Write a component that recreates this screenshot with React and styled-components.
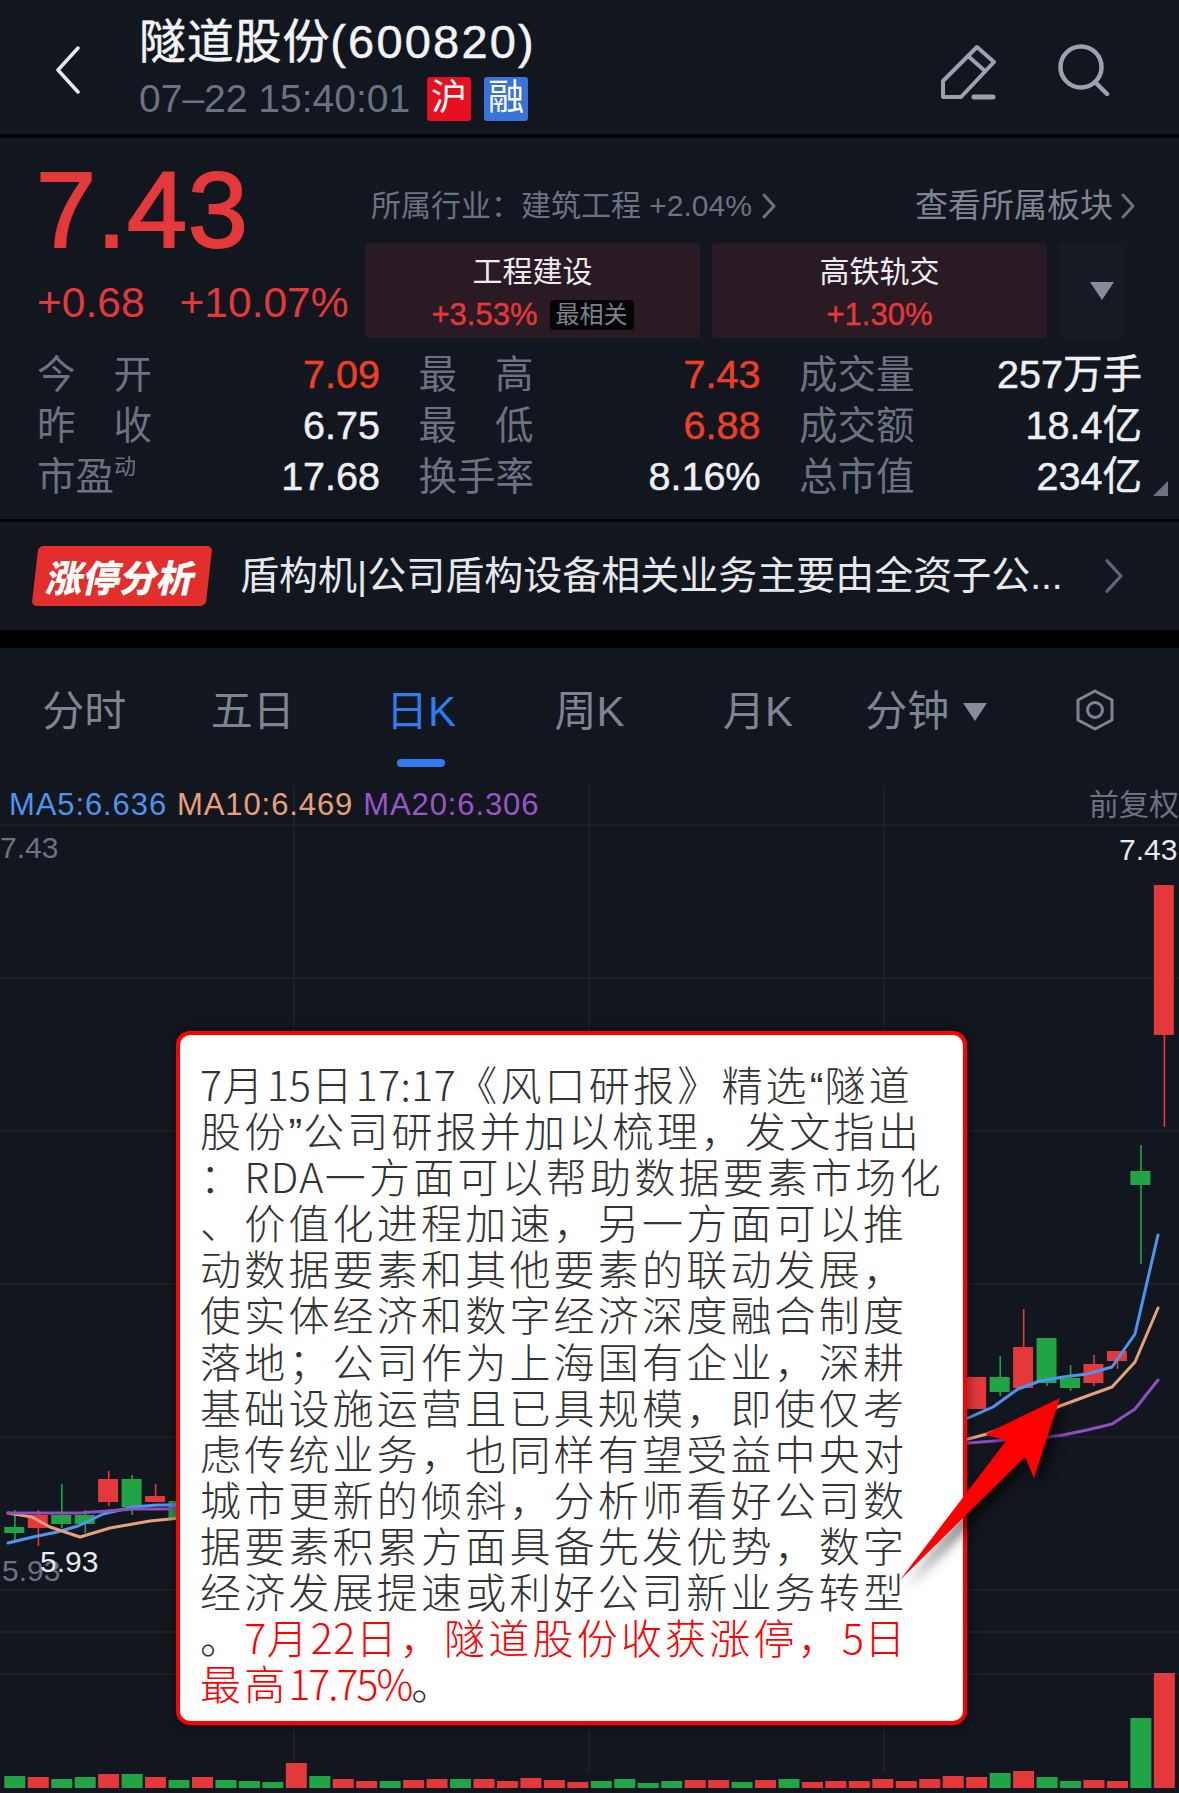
import React from 'react'
import styled, { createGlobalStyle } from 'styled-components'

const BG = '#12161e'
const RED = '#e5383a'
const ORANGE = '#ee3f26'
const GREEN = '#20a446'
const GREY = '#6b7280'
const LATIN = '"Liberation Sans", "Noto Sans CJK SC", sans-serif'

const GlobalStyle = createGlobalStyle`
	html, body {
		margin: 0;
		padding: 0;
		background: #000;
	}
	* {
		box-sizing: border-box;
	}
`

//data
const STATS = [
	{ label: '今开', wide: true, value: '7.09', color: ORANGE },
	{ label: '最高', wide: true, value: '7.43', color: ORANGE },
	{ label: '成交量', value: '257万手' },
	{ label: '昨收', wide: true, value: '6.75' },
	{ label: '最低', wide: true, value: '6.88', color: ORANGE },
	{ label: '成交额', value: '18.4亿' },
	{ label: '市盈', sup: '动', value: '17.68' },
	{ label: '换手率', value: '8.16%' },
	{ label: '总市值', value: '234亿' }
]

const TABS = ['分时', '五日', '日K', '周K', '月K']

// [index, isRed, bodyTop, bodyBottom, wickTop, wickBottom]
const CANDLES = [
	[0, false, 1527, 1533, 1510, 1540],
	[1, true, 1515, 1528, 1510, 1546],
	[2, false, 1515, 1524, 1484, 1528],
	[3, false, 1515, 1524, 1510, 1533],
	[4, true, 1479, 1502, 1471, 1506],
	[5, false, 1479, 1507, 1475, 1515],
	[6, true, 1496, 1502, 1484, 1502],
	[7, false, 1501, 1518, 1501, 1518],
	[41, true, 1377, 1409, 1377, 1409],
	[42, false, 1377, 1392, 1356, 1396],
	[43, true, 1347, 1388, 1309, 1388],
	[44, false, 1338, 1383, 1338, 1386],
	[45, false, 1378, 1388, 1365, 1391],
	[46, true, 1364, 1383, 1355, 1386],
	[47, true, 1351, 1361, 1351, 1369],
	[48, false, 1171, 1185, 1145, 1264],
	[49, true, 885, 1035, 885, 1127]
]

// [isRed, top]
const VOLUMES = [
	[0, 1776], [1, 1777], [0, 1779], [0, 1777], [1, 1774], [0, 1774], [1, 1777], [0, 1780], [1, 1777], [0, 1780],
	[0, 1781], [0, 1782], [1, 1763], [0, 1776], [1, 1779], [1, 1781], [0, 1781], [1, 1780], [1, 1779], [0, 1779],
	[1, 1779], [1, 1781], [1, 1778], [1, 1780], [1, 1782], [0, 1781], [0, 1779], [0, 1783], [0, 1781], [1, 1780],
	[1, 1780], [0, 1782], [1, 1780], [0, 1779], [1, 1782], [1, 1781], [1, 1781], [1, 1779], [1, 1781], [1, 1779],
	[1, 1776], [1, 1777], [0, 1773], [1, 1771], [0, 1777], [0, 1781], [1, 1780], [1, 1781], [0, 1718], [1, 1673]
]

const MA_LINES = [
	{ color: '#4f94ee', points: '8,1543 33,1537 57,1532 78,1526 103,1514 133,1507 157,1505 180,1505' },
	{ color: '#e8a07c', points: '8,1513 32,1517 50,1527 80,1537 110,1528 150,1521 180,1518' },
	{ color: '#8e4fc0', points: '8,1513 33,1513 80,1513 107,1511 133,1509 180,1509' },
	{ color: '#4f94ee', points: '960,1420 968,1418 993,1407 1018,1389 1040,1381 1063,1377 1087,1374 1112,1367 1135,1334 1158,1235' },
	{ color: '#e8a07c', points: '960,1441 968,1439 987,1434 1060,1406 1087,1396 1112,1387 1135,1362 1158,1308' },
	{ color: '#8e4fc0', points: '960,1444 968,1443 1007,1440 1047,1437 1063,1435 1087,1430 1112,1424 1135,1409 1158,1380' }
]

const barX = i => 4.3 + 23.46 * i

const Chevron = ({ width, height, color = '#6b7280', strokeWidth = 3 }) => (
	<svg width={width} height={height} viewBox="0 0 14 26">
		<path d="M2 2 L12 13 L2 24" fill="none" stroke={color} strokeWidth={strokeWidth} strokeLinecap="round" strokeLinejoin="round" />
	</svg>
)

const App = () => {
	return (
		<>
			<GlobalStyle />
			<Page>
				<Header>
					<BackIcon width="26" height="48" viewBox="0 0 26 48">
						<path d="M23 2 L3 24 L23 46" fill="none" stroke="#e6e8ec" strokeWidth="3.5" strokeLinecap="round" strokeLinejoin="round" />
					</BackIcon>
					<TitleBlock>
						<Title>
							隧道股份<TitleCode>(600820)</TitleCode>
						</Title>
						<SubTitle>
							<Clock>07–22 15:40:01</Clock>
							<Tag $bg="#e8101e">沪</Tag>
							<Tag $bg="#3a72d8">融</Tag>
						</SubTitle>
					</TitleBlock>
					<HeaderIcons>
						<svg width="56" height="56" viewBox="0 0 56 56">
							<g fill="none" stroke="#9ca1ae" strokeWidth="4" strokeLinejoin="round" strokeLinecap="round">
								<path d="M3 37 L37 3 L54 18 L21 53 L3 53 Z" />
								<path d="M28 12 L45 27" />
								<path d="M34 53 L53 53" strokeWidth="5" />
							</g>
						</svg>
						<svg width="52" height="52" viewBox="0 0 52 52">
							<g fill="none" stroke="#9ca1ae" strokeWidth="4.5" strokeLinecap="round">
								<circle cx="23" cy="23" r="20.5" />
								<path d="M37 38 L49 50" />
							</g>
						</svg>
					</HeaderIcons>
				</Header>

				<Quote>
					<QuoteTop>
						<PriceBlock>
							<Price>7.43</Price>
							<Change>
								<span>+0.68</span>
								<span>+10.07%</span>
							</Change>
						</PriceBlock>
						<SectorBlock>
							<SectorRow>
								<Industry>
									所属行业：建筑工程 +2.04%
									<Chevron width="14" height="26" />
								</Industry>
								<SectorLink>
									查看所属板块
									<Chevron width="14" height="26" />
								</SectorLink>
							</SectorRow>
							<SectorCards>
								<SectorCard>
									<CardName>工程建设</CardName>
									<CardValue>
										+3.53%<BestTag>最相关</BestTag>
									</CardValue>
								</SectorCard>
								<SectorCard>
									<CardName>高铁轨交</CardName>
									<CardValue>+1.30%</CardValue>
								</SectorCard>
								<MoreCard>
									<DownTriangle />
								</MoreCard>
							</SectorCards>
						</SectorBlock>
					</QuoteTop>
					<Stats>
						{STATS.map(s => (
							<Stat key={s.label}>
								<StatLabel $wide={s.wide}>
									{s.label}
									{s.sup && <StatSup>{s.sup}</StatSup>}
								</StatLabel>
								<StatValue $color={s.color}>{s.value}</StatValue>
							</Stat>
						))}
						<CornerMark />
					</Stats>
				</Quote>

				<Banner>
					<BannerTag>
						<BannerTagText>涨停分析</BannerTagText>
					</BannerTag>
					<BannerText>盾构机|公司盾构设备相关业务主要由全资子公...</BannerText>
					<BannerArrow>
						<Chevron width="20" height="36" color="#5f6673" strokeWidth="2.4" />
					</BannerArrow>
				</Banner>

				<Tabs>
					{TABS.map(t => (
						<Tab key={t} $active={t === '日K'}>
							{t}
							{t === '日K' && <TabUnderline />}
						</Tab>
					))}
					<Tab>
						<TabInner>
							分钟
							<DownTriangle />
						</TabInner>
					</Tab>
					<Tab>
						<SettingsIcon width="40" height="42" viewBox="0 0 40 42">
							<g fill="none" stroke="#7e8490" strokeWidth="3">
								<path d="M20 2 L37 11 L37 31 L20 40 L3 31 L3 11 Z" strokeLinejoin="round" />
								<circle cx="20" cy="21" r="7.5" />
							</g>
						</SettingsIcon>
					</Tab>
				</Tabs>

				<Chart>
					<ChartCanvas viewBox="0 785 1179 1008">
						{[294, 589, 884].map(x => (
							<line key={x} x1={x} x2={x} y1="785" y2="1772" stroke="#252932" strokeWidth="1" />
						))}
						{[825, 978, 1131, 1284, 1437, 1590, 1632, 1674].map(y => (
							<line key={y} x1="0" x2="1179" y1={y} y2={y} stroke="#252932" strokeWidth="1" />
						))}
						{CANDLES.map(([i, isRed, top, bottom, wickTop, wickBottom]) => (
							<g key={i} fill={isRed ? RED : GREEN}>
								<rect x={barX(i) + 9.8} y={wickTop} width="1.6" height={wickBottom - wickTop} />
								<rect x={barX(i)} y={top} width="20" height={bottom - top} />
							</g>
						))}
						{MA_LINES.map(l => (
							<polyline key={l.points} points={l.points} fill="none" stroke={l.color} strokeWidth="3" strokeLinejoin="round" strokeLinecap="round" />
						))}
						{VOLUMES.map(([isRed, top], i) => (
							<rect key={i} x={barX(i)} y={top} width="21" height={1788 - top} fill={isRed ? RED : GREEN} />
						))}
						<ChartLabel x="0" y="858" fill={GREY}>7.43</ChartLabel>
						<ChartLabel x="1119" y="860" fill="#e8eaee">7.43</ChartLabel>
						<ChartLabel x="2" y="1581" fill={GREY}>5.93</ChartLabel>
						<ChartLabel x="40" y="1572" fill="#e8eaee">5.93</ChartLabel>
					</ChartCanvas>

					<MaRow>
						<MaValue $color="#4f94ee">MA5:6.636</MaValue>
						<MaValue $color="#e8a07c">MA10:6.469</MaValue>
						<MaValue $color="#9a55c8">MA20:6.306</MaValue>
						<AdjustLabel>前复权</AdjustLabel>
					</MaRow>

					<Popup>
						<PopupLine>
							<Num>7</Num>月<Num>15</Num>日<Num>17:17</Num>《风口研报》精选<QuoteMark>“</QuoteMark>隧道
						</PopupLine>
						<PopupLine>
							股份<QuoteMark>”</QuoteMark>公司研报并加以梳理，发文指出
						</PopupLine>
						<PopupLine>
							：<Num $wide>RDA</Num>一方面可以帮助数据要素市场化
						</PopupLine>
						<PopupLine>、价值化进程加速，另一方面可以推</PopupLine>
						<PopupLine>动数据要素和其他要素的联动发展，</PopupLine>
						<PopupLine>使实体经济和数字经济深度融合制度</PopupLine>
						<PopupLine>落地；公司作为上海国有企业，深耕</PopupLine>
						<PopupLine>基础设施运营且已具规模，即使仅考</PopupLine>
						<PopupLine>虑传统业务，也同样有望受益中央对</PopupLine>
						<PopupLine>城市更新的倾斜，分析师看好公司数</PopupLine>
						<PopupLine>据要素积累方面具备先发优势，数字</PopupLine>
						<PopupLine>经济发展提速或利好公司新业务转型</PopupLine>
						<PopupLine>
							。
							<Highlight>
								<Num>7</Num>月<Num>22</Num>日，隧道股份收获涨停，<Num>5</Num>日
							</Highlight>
						</PopupLine>
						<PopupLine>
							<Highlight>
								最高<Num $tight>17.75%</Num>
							</Highlight>
							。
						</PopupLine>
					</Popup>

					<ArrowOverlay viewBox="0 785 1179 1008">
						<path d="M1060 1398 L985 1434 L1006 1441 L900 1580 L1025 1457 L1034 1478 Z" fill="#ff0000" />
					</ArrowOverlay>
				</Chart>
			</Page>
		</>
	)
}

const Page = styled.div`
	width: 1179px;
	height: 1793px;
	overflow: hidden;
	background: ${BG};
	font-family: ${LATIN};
`

const Header = styled.header`
	height: 138px;
	border-bottom: 4px solid #000;
	padding-left: 55px;
	display: flex;
	align-items: flex-start;
`

const BackIcon = styled.svg`
	margin-top: 46px;
	flex: none;
`

const TitleBlock = styled.div`
	margin-left: 58px;
	padding-top: 14px;
`

const Title = styled.div`
	font-size: 47px;
	line-height: 56px;
	color: #f2f3f5;
	letter-spacing: 0.8px;
	white-space: nowrap;
	-webkit-text-stroke: 0.5px #f2f3f5;
`

const TitleCode = styled.span`
	letter-spacing: 2.2px;
`

const SubTitle = styled.div`
	display: flex;
	align-items: center;
	margin-top: 7px;
`

const Clock = styled.span`
	font-size: 39px;
	line-height: 44px;
	color: ${GREY};
	width: 288px;
	white-space: nowrap;
`

const Tag = styled.span`
	width: 44px;
	height: 44px;
	margin-right: 13px;
	border-radius: 3px;
	background: ${p => p.$bg};
	color: #fff;
	font-size: 36px;
	line-height: 42px;
	text-align: center;
`

const HeaderIcons = styled.div`
	margin-left: auto;
	margin-top: 44px;
	width: 239px;
	display: flex;
	gap: 62px;
	align-items: flex-start;
`

const Quote = styled.section`
	height: 384px;
	border-bottom: 3px solid #000;
`

const QuoteTop = styled.div`
	display: flex;
	height: 208px;
`

const PriceBlock = styled.div`
	width: 365px;
	padding: 22px 0 0 36px;
	flex: none;
`

const Price = styled.div`
	font-size: 108px;
	line-height: 100px;
	letter-spacing: 0.5px;
	color: ${RED};
	-webkit-text-stroke: 2px ${RED};
`

const Change = styled.div`
	margin-top: 20px;
	padding-left: 1px;
	display: flex;
	gap: 35px;
	font-size: 42.5px;
	line-height: 46px;
	color: ${RED};
	white-space: nowrap;
`

const SectorBlock = styled.div`
	flex: 1;
	padding-top: 46px;
`

const SectorRow = styled.div`
	height: 44px;
	padding: 0 44px 0 6px;
	display: flex;
	justify-content: space-between;
	align-items: center;
`

const Industry = styled.div`
	display: flex;
	align-items: center;
	gap: 10px;
	font-size: 30px;
	line-height: 44px;
	color: ${GREY};
	white-space: nowrap;
`

const SectorLink = styled.div`
	display: flex;
	align-items: center;
	gap: 8px;
	font-size: 33px;
	line-height: 44px;
	color: #7e8490;
	white-space: nowrap;
`

const SectorCards = styled.div`
	margin-top: 15px;
	display: grid;
	grid-template-columns: 335px 335px 64px;
	gap: 12px;
`

const SectorCard = styled.div`
	height: 95px;
	padding-top: 2px;
	border-radius: 4px;
	background: #2a1a23;
	display: flex;
	flex-direction: column;
	align-items: center;
	justify-content: center;
	gap: 6px;
`

const MoreCard = styled.div`
	height: 95px;
	padding-right: 9px;
	border-radius: 4px;
	background: #161a23;
	display: flex;
	align-items: center;
	justify-content: flex-end;
`

const CardName = styled.div`
	font-size: 30px;
	line-height: 40px;
	color: #eceef1;
`

const CardValue = styled.div`
	display: flex;
	align-items: center;
	font-size: 31px;
	line-height: 34px;
	color: ${RED};
	-webkit-text-stroke: 0.4px ${RED};
`

const BestTag = styled.span`
	margin-left: 12px;
	padding: 0 6px;
	height: 30px;
	border-radius: 4px;
	background: #050505;
	color: #7c818c;
	font-size: 24px;
	line-height: 30px;
	-webkit-text-stroke: 0;
`

const DownTriangle = styled.span`
	display: inline-block;
	width: 0;
	height: 0;
	border-left: 12px solid transparent;
	border-right: 12px solid transparent;
	border-top: 18px solid #858c9a;
`

const Stats = styled.div`
	position: relative;
	padding: 0 37px;
	display: grid;
	grid-template-columns: 343px 342px 343px;
	column-gap: 38.5px;
	grid-auto-rows: 51px;
	margin-top: 3px;
`

const Stat = styled.div`
	display: flex;
	justify-content: space-between;
	align-items: center;
`

const StatLabel = styled.span`
	font-size: 38.5px;
	line-height: 51px;
	color: ${GREY};
	letter-spacing: ${p => (p.$wide ? '38px' : '0')};
	white-space: nowrap;
`

const StatSup = styled.sup`
	font-size: 22px;
	vertical-align: 16px;
	line-height: 0;
`

const StatValue = styled.span`
	font-size: 39.5px;
	line-height: 51px;
	color: ${p => p.$color || '#eef0f3'};
	-webkit-text-stroke: 0.5px ${p => p.$color || '#eef0f3'};
	white-space: nowrap;
`

const CornerMark = styled.span`
	position: absolute;
	right: 11px;
	bottom: 6px;
	width: 0;
	height: 0;
	border-left: 15px solid transparent;
	border-bottom: 15px solid #6b7280;
`

const Banner = styled.section`
	height: 126px;
	border-bottom: 18px solid #000;
	padding-left: 32px;
	display: flex;
	align-items: center;
`

const BannerTag = styled.div`
	width: 174px;
	height: 60px;
	margin-left: 3px;
	border-radius: 5px;
	background: #e22f2c;
	transform: skewX(-6.5deg);
	display: flex;
	align-items: center;
	justify-content: center;
	flex: none;
`

const BannerTagText = styled.span`
	font-family: "Noto Sans CJK SC", sans-serif;
	font-size: 37px;
	line-height: 50px;
	font-weight: 900;
	color: #fff;
	white-space: nowrap;
	transform: skewX(-6deg);
`

const BannerText = styled.div`
	margin-left: 31px;
	font-size: 39px;
	line-height: 52px;
	color: #e6e8ec;
	white-space: nowrap;
`

const BannerArrow = styled.div`
	margin-left: auto;
	margin-right: 55px;
	display: flex;
`

const Tabs = styled.nav`
	height: 137px;
	padding-top: 32px;
	display: grid;
	grid-template-columns: repeat(7, 1fr);
	align-items: start;
`

const Tab = styled.div`
	height: 64px;
	display: flex;
	flex-direction: column;
	align-items: center;
	justify-content: center;
	font-size: 42px;
	line-height: 64px;
	color: ${p => (p.$active ? '#2e7cf0' : '#7e8490')};
	white-space: nowrap;
	position: relative;
`

const TabInner = styled.div`
	display: flex;
	align-items: center;
	gap: 14px;
`

const TabUnderline = styled.span`
	position: absolute;
	top: 79px;
	left: 50%;
	width: 48px;
	height: 8px;
	margin-left: -24px;
	border-radius: 4px;
	background: #2e7cf0;
`

const SettingsIcon = styled.svg`
	display: block;
	margin-bottom: 5px;
`

const Chart = styled.section`
	position: relative;
	height: 1008px;
`

const ChartCanvas = styled.svg`
	position: absolute;
	inset: 0;
	width: 100%;
	height: 100%;
`

const ChartLabel = styled.text`
	font-family: ${LATIN};
	font-size: 30px;
`

const MaRow = styled.div`
	position: relative;
	height: 40px;
	padding-left: 9px;
	display: flex;
	align-items: center;
	gap: 10px;
`

const MaValue = styled.span`
	font-size: 31px;
	line-height: 40px;
	letter-spacing: 0.9px;
	color: ${p => p.$color};
`

const AdjustLabel = styled.span`
	margin-left: auto;
	font-size: 30px;
	line-height: 40px;
	color: ${GREY};
`

const Popup = styled.div`
	position: absolute;
	top: 246px;
	left: 176px;
	width: 791px;
	height: 694px;
	padding: 25px 0 0 20px;
	background: #fff;
	border: 4px solid #ff0000;
	border-radius: 14px;
	box-shadow: 0 0 14px rgba(0, 0, 0, 0.5);
	font-family: "Noto Sans CJK SC", sans-serif;
	font-weight: 300;
	color: #333;
`

const PopupLine = styled.div`
	font-size: 41px;
	line-height: 46.1px;
	letter-spacing: 3.2px;
	white-space: nowrap;
`

const Num = styled.span`
	letter-spacing: ${p => (p.$tight ? '-2px' : p.$wide ? '1.5px' : '0.5px')};
`

const QuoteMark = styled.span`
	font-family: "Liberation Sans", sans-serif;
	line-height: 0;
	letter-spacing: 1px;
`

const Highlight = styled.span`
	color: #ff0000;
`

const ArrowOverlay = styled.svg`
	position: absolute;
	inset: 0;
	width: 100%;
	height: 100%;
	pointer-events: none;
	filter: drop-shadow(6px 8px 6px rgba(0, 0, 0, 0.55));
`

export default App
